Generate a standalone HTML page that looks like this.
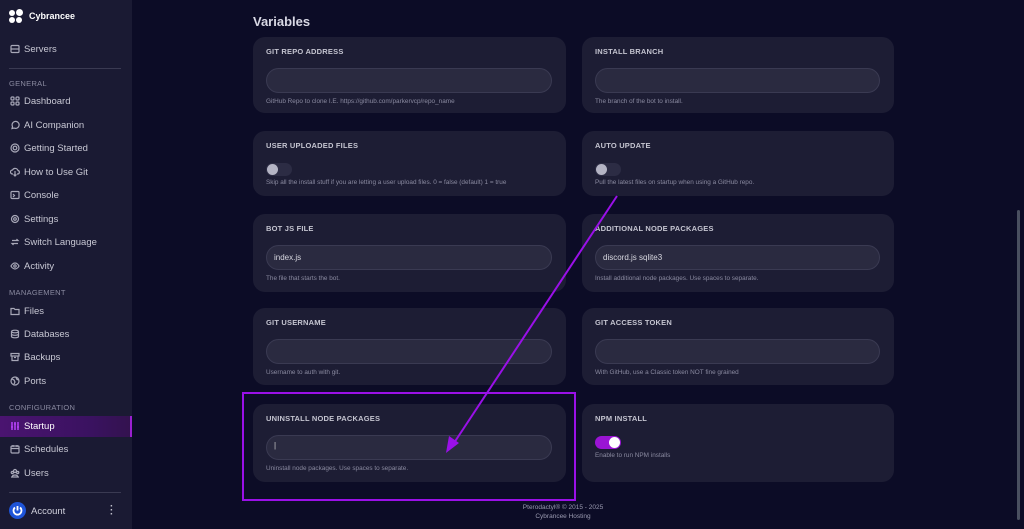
<!DOCTYPE html>
<html><head><meta charset="utf-8"><style>
*{box-sizing:border-box;margin:0;padding:0}
body{width:1024px;height:529px;background:#0c0c26;font-family:"Liberation Sans",sans-serif;position:relative;overflow:hidden;color:#d0d0dc}
.sb{position:absolute;left:0;top:0;width:132px;height:529px;background:#1a1a33}
.it{position:absolute;left:10px;font-size:9.5px;color:#c8c8d4;display:flex;align-items:center;gap:4px;height:14px}
.it svg{width:10px;height:10px;stroke:#a8a8b8;fill:none;stroke-width:1.2}
.sec{position:absolute;left:9px;font-size:7.5px;color:#8a8aa0;letter-spacing:.3px}
.hr{position:absolute;left:9px;width:112px;height:1px;background:#3a3a52}
.card{position:absolute;background:#1d1d34;border-radius:12px}
.lab{position:absolute;left:13px;top:10px;font-size:7.5px;font-weight:bold;color:#c4c4d0;letter-spacing:.2px}
.inp{position:absolute;left:13px;right:14px;top:31px;height:25px;border-radius:13px;background:#2a2a40;border:1px solid #3a3a52;font-size:8px;color:#d8d8e0;padding:7px 0 0 7px}
.help{position:absolute;left:13px;top:61px;font-size:6.4px;color:#8a8aa0}
.tg{position:absolute;left:13px;top:32px;width:26px;height:13px;border-radius:7px;background:#2c2c44}
.tg i{position:absolute;left:1px;top:1px;width:11px;height:11px;border-radius:50%;background:#b4b4c4}
.tg.on{background:#9a14d4}.tg.on i{left:14px;background:#fff}
</style></head><body>
<div class="sb">
 <div style="position:absolute;left:9px;top:9px;width:14px;height:14px">
  <span style="position:absolute;left:0;top:1px;width:6px;height:6px;border-radius:50%;background:#fff"></span>
  <span style="position:absolute;left:7px;top:0;width:7px;height:7px;border-radius:50%;background:#fff"></span>
  <span style="position:absolute;left:0;top:8px;width:6px;height:6px;border-radius:50%;background:#fff"></span>
  <span style="position:absolute;left:7px;top:8px;width:6px;height:6px;border-radius:50%;background:#fff"></span>
 </div>
 <div style="position:absolute;left:29px;top:11px;font-size:9px;font-weight:bold;color:#fff">Cybrancee</div>
 <div class="it" style="top:42px"><svg viewBox="0 0 10 10"><rect x="1" y="1.5" width="8" height="7" rx="1"/><path d="M1 5h8"/></svg>Servers</div>
 <div class="hr" style="top:68px"></div>
 <div class="sec" style="top:79px">GENERAL</div>
 <div class="it" style="top:94px"><svg viewBox="0 0 10 10"><rect x="1" y="1" width="3" height="3" rx="1"/><rect x="6" y="1" width="3" height="3" rx="1"/><rect x="1" y="6" width="3" height="3" rx="1"/><rect x="6" y="6" width="3" height="3" rx="1"/></svg>Dashboard</div>
 <div class="it" style="top:118px"><svg viewBox="0 0 10 10"><path d="M2 8.5l.5-2A3.5 3.5 0 1 1 4 8z"/></svg>AI Companion</div>
 <div class="it" style="top:141px"><svg viewBox="0 0 10 10"><circle cx="5" cy="5" r="4"/><circle cx="5" cy="5" r="1.8"/></svg>Getting Started</div>
 <div class="it" style="top:165px"><svg viewBox="0 0 10 10"><path d="M3 7H2.5a2 2 0 0 1 0-4A3 3 0 0 1 8 3.5a1.8 1.8 0 0 1 0 3.5H7M5 4v5M3.5 7.5L5 9l1.5-1.5"/></svg>How to Use Git</div>
 <div class="it" style="top:188px"><svg viewBox="0 0 10 10"><rect x="1" y="1.5" width="8" height="7" rx="1"/><path d="M3 4l1.5 1.5L3 7"/></svg>Console</div>
 <div class="it" style="top:212px"><svg viewBox="0 0 10 10"><circle cx="5" cy="5" r="3.5"/><circle cx="5" cy="5" r="1.3"/></svg>Settings</div>
 <div class="it" style="top:235px"><svg viewBox="0 0 10 10"><path d="M2 3.5h6L6.5 2M8 6.5H2L3.5 8"/></svg>Switch Language</div>
 <div class="it" style="top:259px"><svg viewBox="0 0 10 10"><path d="M1 5s1.5-3 4-3 4 3 4 3-1.5 3-4 3-4-3-4-3z"/><circle cx="5" cy="5" r="1.2"/></svg>Activity</div>
 <div class="sec" style="top:288px">MANAGEMENT</div>
 <div class="it" style="top:304px"><svg viewBox="0 0 10 10"><path d="M1 2.5h3l1 1h4v5H1z"/></svg>Files</div>
 <div class="it" style="top:327px"><svg viewBox="0 0 10 10"><ellipse cx="5" cy="2.5" rx="3.5" ry="1.3"/><path d="M1.5 2.5v5c0 .7 1.6 1.3 3.5 1.3s3.5-.6 3.5-1.3v-5M1.5 5c0 .7 1.6 1.3 3.5 1.3S8.5 5.7 8.5 5"/></svg>Databases</div>
 <div class="it" style="top:350px"><svg viewBox="0 0 10 10"><rect x="1" y="1.5" width="8" height="2.5"/><path d="M2 4v4.5h6V4M4 5.5h2"/></svg>Backups</div>
 <div class="it" style="top:374px"><svg viewBox="0 0 10 10"><circle cx="5" cy="5" r="4"/><path d="M2 3l2 1 1 2-1 2M6 1.5l1 2 2 .5"/></svg>Ports</div>
 <div class="sec" style="top:403px">CONFIGURATION</div>
 <div style="position:absolute;left:0;top:416px;width:132px;height:21px;background:linear-gradient(90deg,#4a1470,#3a1260 70%,#33124f);border-right:2px solid #9a20d0"></div>
 <div class="it" style="top:419px;color:#fff"><svg viewBox="0 0 10 10" style="stroke:#b040f0;stroke-width:1.6"><path d="M2 1v8M5 1v8M8 1v8M1 6h2M4 3h2M7 6h2"/></svg>Startup</div>
 <div class="it" style="top:442px"><svg viewBox="0 0 10 10"><rect x="1" y="2" width="8" height="7" rx="1"/><path d="M1 4.5h8M3 1v2M7 1v2"/></svg>Schedules</div>
 <div class="it" style="top:466px"><svg viewBox="0 0 10 10"><circle cx="5" cy="3" r="1.5"/><circle cx="2.3" cy="4.5" r="1.1"/><circle cx="7.7" cy="4.5" r="1.1"/><path d="M1 9h8M2.5 8.5c0-2 5-2 5 0"/></svg>Users</div>
 <div class="hr" style="top:492px"></div>
 <div style="position:absolute;left:9px;top:502px;width:17px;height:17px;border-radius:50%;background:#1e54d8"><svg viewBox="0 0 17 17" width="17" height="17" style="fill:none;stroke:#fff;stroke-width:1.8"><path d="M6 5.5a4 4 0 1 0 5 0M8.5 4v4.5"/></svg></div>
 <div style="position:absolute;left:31px;top:506px;font-size:9.5px;color:#d0d0dc">Account</div>
 <div style="position:absolute;left:110px;top:505px;font-size:10px;color:#c0c0cc;font-weight:bold;line-height:4px">·<br>·<br>·</div>
</div>

<div style="position:absolute;left:253px;top:14px;font-size:13px;font-weight:bold;color:#d8d8e4">Variables</div>

<div class="card" style="left:253px;top:37px;width:313px;height:76px"><div class="lab">GIT REPO ADDRESS</div><div class="inp"></div><div class="help">GitHub Repo to clone I.E. https://github.com/parkervcp/repo_name</div></div>
<div class="card" style="left:582px;top:37px;width:312px;height:76px"><div class="lab">INSTALL BRANCH</div><div class="inp"></div><div class="help">The branch of the bot to install.</div></div>

<div class="card" style="left:253px;top:131px;width:313px;height:65px"><div class="lab">USER UPLOADED FILES</div><div class="tg"><i></i></div><div class="help" style="top:48px">Skip all the install stuff if you are letting a user upload files. 0 = false (default) 1 = true</div></div>
<div class="card" style="left:582px;top:131px;width:312px;height:65px"><div class="lab">AUTO UPDATE</div><div class="tg"><i></i></div><div class="help" style="top:48px">Pull the latest files on startup when using a GitHub repo.</div></div>

<div class="card" style="left:253px;top:214px;width:313px;height:78px"><div class="lab">BOT JS FILE</div><div class="inp">index.js</div><div class="help">The file that starts the bot.</div></div>
<div class="card" style="left:582px;top:214px;width:312px;height:78px"><div class="lab">ADDITIONAL NODE PACKAGES</div><div class="inp">discord.js sqlite3</div><div class="help">Install additional node packages. Use spaces to separate.</div></div>

<div class="card" style="left:253px;top:308px;width:313px;height:77px"><div class="lab">GIT USERNAME</div><div class="inp"></div><div class="help">Username to auth with git.</div></div>
<div class="card" style="left:582px;top:308px;width:312px;height:77px"><div class="lab">GIT ACCESS TOKEN</div><div class="inp"></div><div class="help">With GitHub, use a Classic token NOT fine grained</div></div>

<div class="card" style="left:253px;top:404px;width:313px;height:78px"><div class="lab">UNINSTALL NODE PACKAGES</div><div class="inp" style="padding:5px 0 0 7px;color:#ccc">|</div><div class="help">Uninstall node packages. Use spaces to separate.</div></div>
<div class="card" style="left:582px;top:404px;width:312px;height:78px"><div class="lab">NPM INSTALL</div><div class="tg on"><i></i></div><div class="help" style="top:48px">Enable to run NPM installs</div></div>

<div style="position:absolute;left:242px;top:392px;width:334px;height:109px;border:2px solid #9a10e8"></div>

<svg style="position:absolute;left:0;top:0" width="1024" height="529"><line x1="617" y1="196" x2="452" y2="446" stroke="#9a10e8" stroke-width="2"/><polygon points="446,453 449,436 459,443" fill="#9a10e8"/></svg>

<div style="position:absolute;left:483px;top:503px;width:160px;text-align:center;font-size:6.5px;color:#9a9ab0;line-height:9px">Pterodactyl® © 2015 - 2025<br>Cybrancee Hosting</div>

<div style="position:absolute;left:1017px;top:210px;width:3px;height:310px;border-radius:2px;background:#4a5060"></div>
</body></html>
